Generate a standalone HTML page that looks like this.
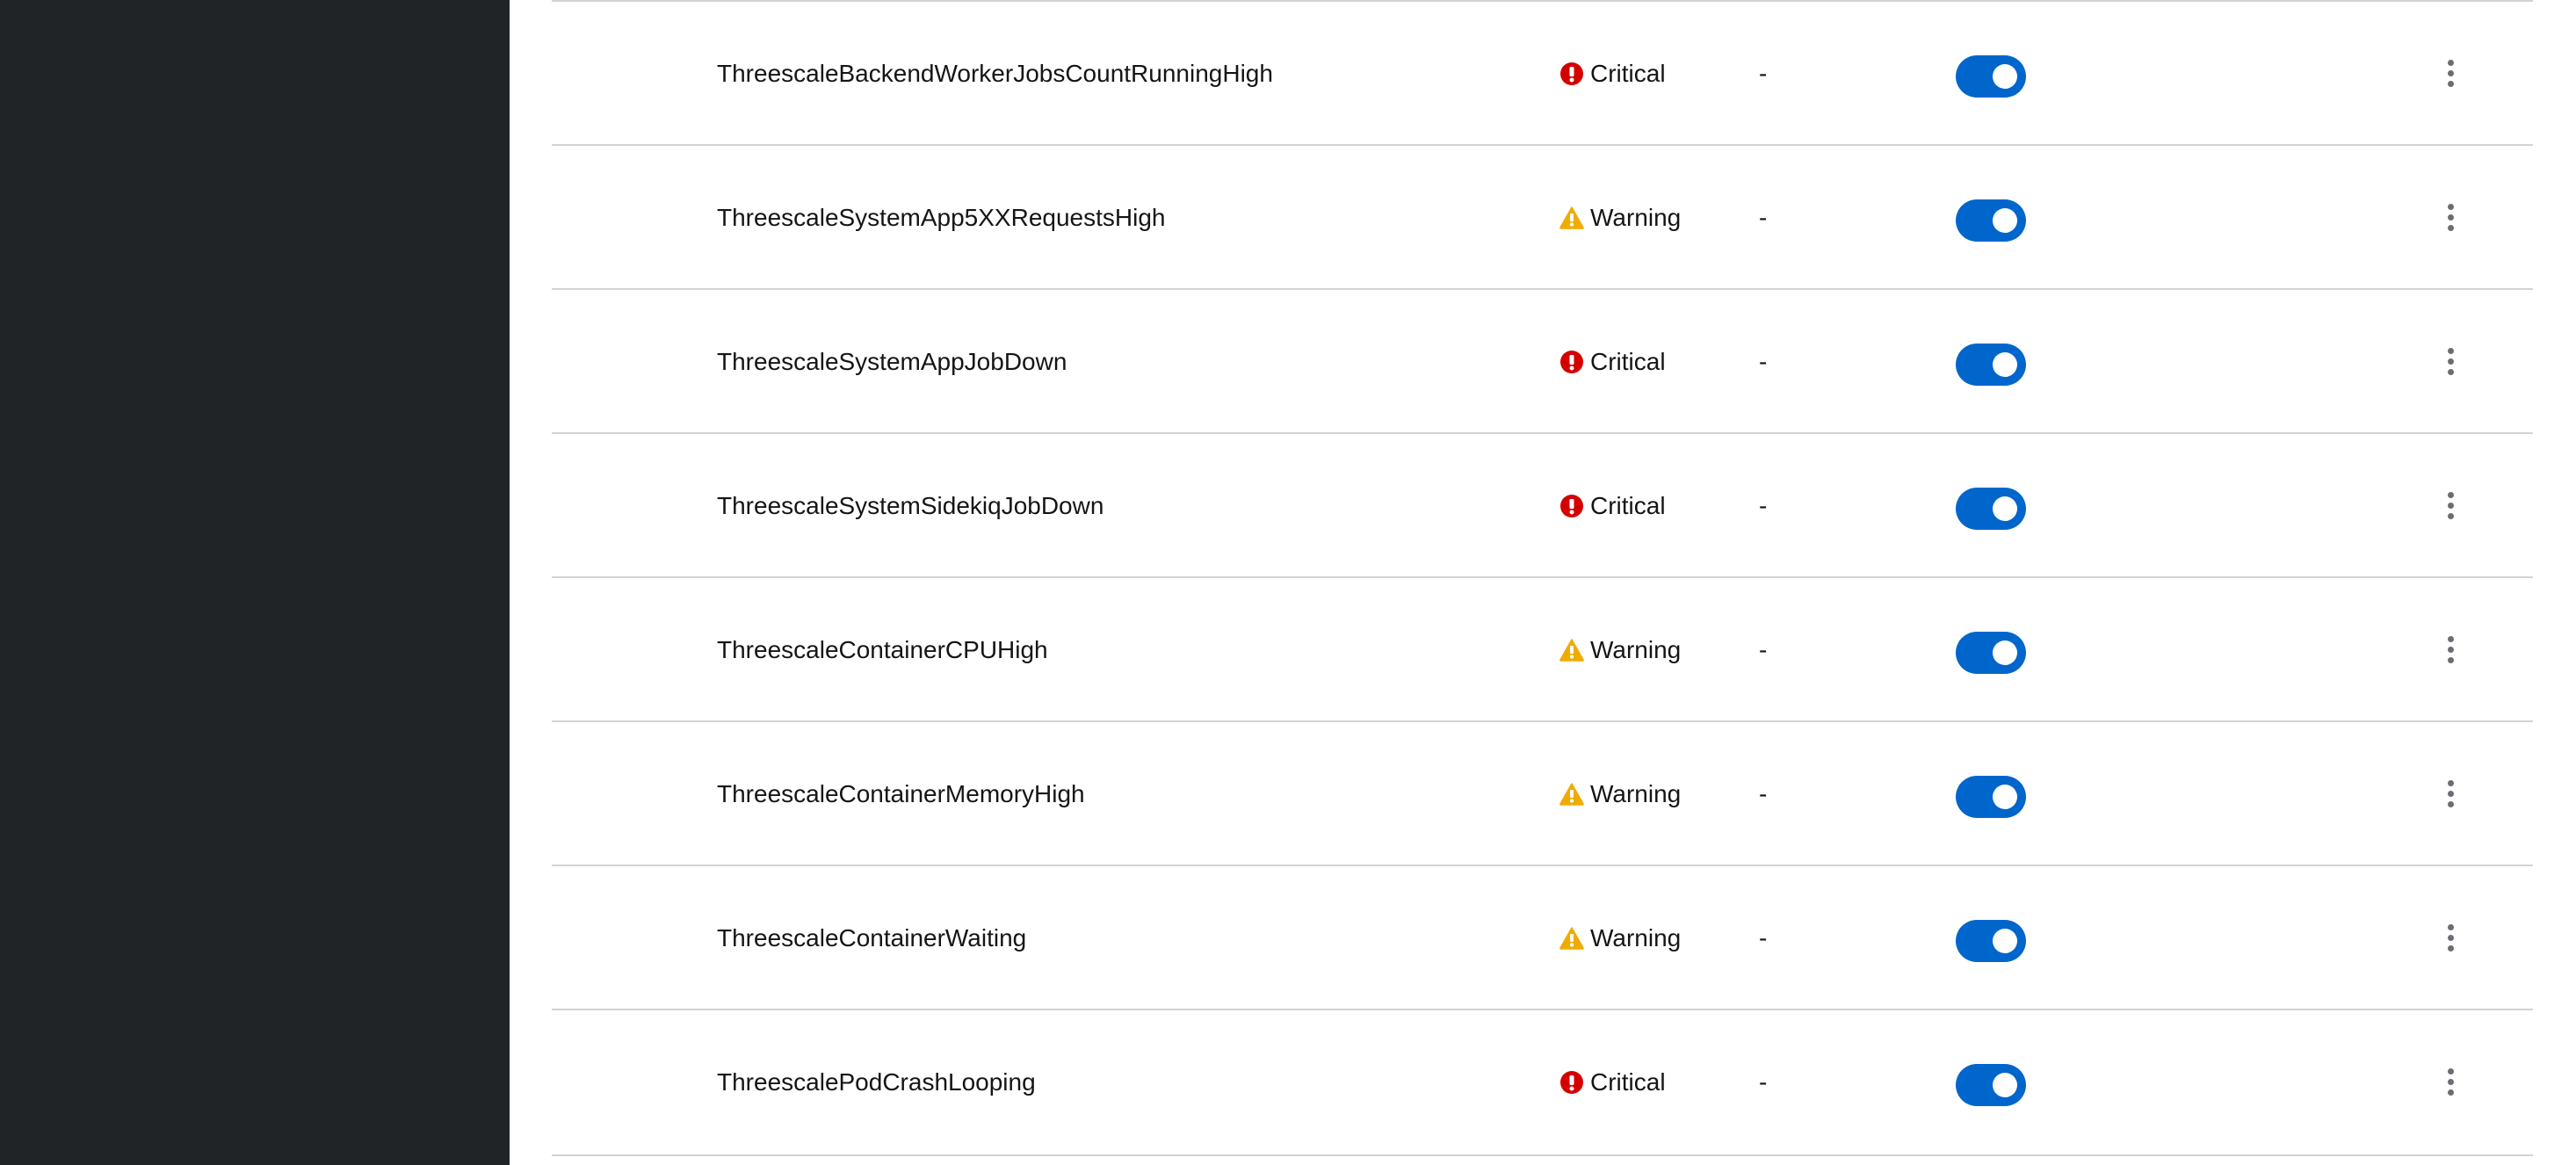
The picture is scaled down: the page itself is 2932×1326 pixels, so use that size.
<!DOCTYPE html>
<html><head><meta charset="utf-8"><style>
html,body{margin:0;padding:0;width:2932px;height:1326px;background:#fff;overflow:hidden;font-family:"Liberation Sans",sans-serif;color:#151515}
.side{position:absolute;left:0;top:0;width:580px;height:1326px;background:#212427}
.row{position:absolute;left:628px;width:2255px;height:164px;border-top:2px solid #d2d2d2}
.row.last{border-bottom:2px solid #d2d2d2}
.name{position:absolute;left:188px;top:0;line-height:164px;font-size:28px}
.sev{position:absolute;left:1147px;top:0;line-height:164px;font-size:28px;display:flex;align-items:center;height:164px}
.sev svg{margin-right:7px}
.dash{position:absolute;left:1374px;line-height:164px;font-size:28px}
.tog{position:absolute;left:1598px;top:61px;width:80px;height:48px;border-radius:24px;background:#0066cc}
.tog:after{content:"";position:absolute;right:10px;top:10px;width:28px;height:28px;border-radius:50%;background:#fff}
.keb{position:absolute;left:2158px;top:66px}
.keb i{display:block;width:7px;height:7px;border-radius:50%;background:#6a6e73;margin-bottom:5px}
</style></head><body>
<div class="side"></div>
<div id="rows"></div>
<script>
var d=[["ThreescaleBackendWorkerJobsCountRunningHigh",1],["ThreescaleSystemApp5XXRequestsHigh",0],["ThreescaleSystemAppJobDown",1],["ThreescaleSystemSidekiqJobDown",1],["ThreescaleContainerCPUHigh",0],["ThreescaleContainerMemoryHigh",0],["ThreescaleContainerWaiting",0],["ThreescalePodCrashLooping",1]];
var crit='<svg width="28" height="28" viewBox="0 0 28 28"><circle cx="14" cy="14" r="13" fill="#d40000"/><rect x="11.5" y="6" width="5" height="11" rx="1.5" fill="#fff"/><circle cx="14" cy="21" r="2.5" fill="#fff"/></svg>';
var warn='<svg width="28" height="26" viewBox="0 0 28 26"><path d="M14 1 L27 24 Q27.5 25 26 25 L2 25 Q0.5 25 1 24 Z" fill="#f0ab00" stroke="#f0ab00" stroke-linejoin="round" stroke-width="1.5"/><rect x="12" y="8" width="4" height="9" rx="1" fill="#fff"/><circle cx="14" cy="20.5" r="2.2" fill="#fff"/></svg>';
var h='';
d.forEach(function(r,i){h+='<div class="row'+(i==7?' last':'')+'" style="top:'+(i*164)+'px"><div class="name">'+r[0]+'</div><div class="sev">'+(r[1]?crit+'Critical':warn+'Warning')+'</div><div class="dash">-</div><div class="tog"></div><div class="keb"><i></i><i></i><i></i></div></div>';});
document.getElementById('rows').innerHTML=h;
</script>
</body></html>
